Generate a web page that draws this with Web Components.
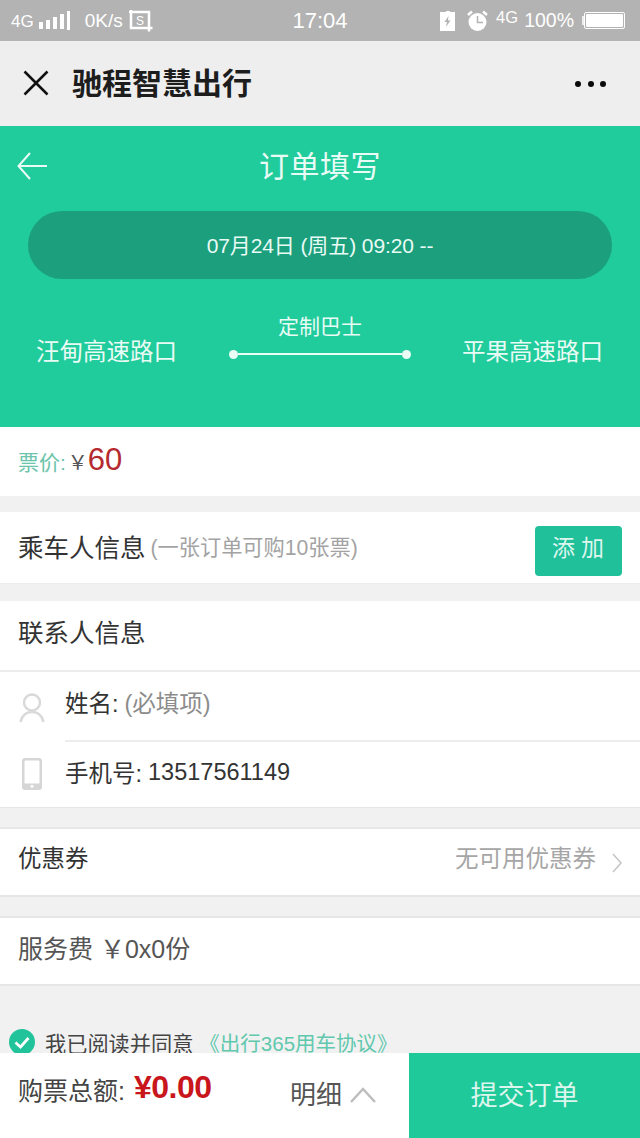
<!DOCTYPE html>
<html lang="zh">
<head>
<meta charset="utf-8">
<title>订单填写</title>
<style>
    html, body { margin: 0; padding: 0; }
    body {
        width: 640px;
        height: 1138px;
        overflow: hidden;
        position: relative;
        background: #f1f1f1;
        font-family: "Liberation Sans", "Noto Sans CJK SC", sans-serif;
    }
    page-gap { height: 16px; }
</style>
</head>
<body>
<status-bar></status-bar>
<nav-bar>驰程智慧出行</nav-bar>
<order-hero></order-hero>
<price-row></price-row>
<page-gap></page-gap>
<passenger-row></passenger-row>
<page-gap style="height:17px"></page-gap>
<contact-card></contact-card>
<page-gap style="height:19px"></page-gap>
<plain-row>
    <span>优惠券</span>
    <span slot="right">无可用优惠券</span>
</plain-row>
<page-gap style="height:19px"></page-gap>
<plain-row style="color:#555;font-size:25px;padding-bottom:8px">
    <span>服务费 ￥0x0份</span>
</plain-row>
<agree-row></agree-row>
<bottom-bar></bottom-bar>

<script>
class PageGap extends HTMLElement {
    constructor() {
        super();
        this.attachShadow({ mode: 'open' });
        this.shadowRoot.innerHTML = '<style>:host { display: block; }</style>';
    }
}

class StatusBar extends HTMLElement {
    constructor() {
        super();
        this.attachShadow({ mode: 'open' });
        this.shadowRoot.innerHTML = `
        <style>
            :host {
                display: flex;
                align-items: center;
                height: 41px;
                padding: 0 15px 0 11px;
                box-sizing: border-box;
                background: #b3b3b3;
                color: #fff;
                font-size: 20px;
                position: relative;
            }
            svg { display: block; flex: none; }
            .left, .right { display: flex; align-items: center; }
            .right { margin-left: auto; }
            .g { font-size: 17px; }
            .time {
                position: absolute;
                left: 0;
                right: 0;
                text-align: center;
                font-size: 22px;
            }
        </style>
        <div class="left">
            <span class="g" style="margin-top:2px">4G</span>
            <svg width="33" height="20" style="margin-left:5px" fill="#fff">
                <rect x="0" y="11" width="4" height="7"/>
                <rect x="7" y="9" width="4" height="9"/>
                <rect x="14" y="6" width="4" height="12"/>
                <rect x="21" y="3" width="4" height="15"/>
                <rect x="28" y="0" width="3" height="19"/>
            </svg>
            <span style="margin-left:13px;font-size:19px">0K/s</span>
            <svg width="24" height="22" style="margin-left:6px" fill="none" stroke="#fff" stroke-width="2.500">
                <path d="M2 2H20V18H2Z"/>
                <path d="M20 18H23.500M20 18V21.500"/>
                <path d="M0 2H2M2 0V2"/>
                <text x="7" y="15" font-size="12" fill="#fff" stroke="none" font-family="Liberation Sans">S</text>
            </svg>
        </div>
        <span class="time">17:04</span>
        <div class="right">
            <svg width="15" height="20" fill="#fff">
                <path d="M3 1H6V0H10V1H15V20H0V1Z"/>
                <path d="M8.5 5L4.5 11H7L6 16L10.500 9.500H8Z" fill="#b3b3b3"/>
            </svg>
            <svg width="21" height="22" style="margin-left:12px">
                <circle cx="10.500" cy="12" r="9" fill="#fff"/>
                <path d="M10.500 6V12.500H16" fill="none" stroke="#b3b3b3" stroke-width="1.500"/>
                <path d="M1 5L5 1.500M20 5L16 1.500" stroke="#fff" stroke-width="2.500" fill="none"/>
            </svg>
            <span class="g" style="margin-left:8px;margin-top:-6px;font-size:16.500px">4G</span>
            <span style="margin-left:6px;font-size:19.500px">100%</span>
            <div style="margin-left:8px;display:flex;align-items:center">
                <div style="width:2px;height:9px;background:#eee"></div>
                <div style="border:1px solid #fff;border-radius:2px;padding:1px;box-sizing:content-box;width:37px;height:13px">
                    <div style="width:100%;height:100%;background:#fff;border-radius:1px"></div>
                </div>
            </div>
        </div>`;
    }
}

class NavBar extends HTMLElement {
    constructor() {
        super();
        this.attachShadow({ mode: 'open' });
        this.shadowRoot.innerHTML = `
        <style>
            :host {
                display: flex;
                align-items: center;
                height: 85px;
                padding: 0 34px 0 23px;
                box-sizing: border-box;
                background: #eeeeee;
                color: #1d1d1d;
            }
            .title {
                margin-left: 23px;
                margin-bottom: 6px;
                font-size: 30px;
                font-weight: 700;
            }
            .more { margin-left: auto; display: flex; gap: 6.500px; }
            .more i { width: 6px; height: 6px; border-radius: 50%; background: #0a0a0a; display: block; }
            svg { display: block; margin-bottom: 2px; }
        </style>
        <svg width="26" height="26" stroke="#111" stroke-width="2.500" fill="none">
            <path d="M1.500 1.500L24.500 24.500M24.500 1.500L1.500 24.500"/>
        </svg>
        <span class="title"><slot></slot></span>
        <div class="more"><i></i><i></i><i></i></div>`;
    }
}

class OrderHero extends HTMLElement {
    constructor() {
        super();
        this.attachShadow({ mode: 'open' });
        this.shadowRoot.innerHTML = `
        <style>
            :host {
                display: block;
                height: 301px;
                box-sizing: border-box;
                background: #20cb9c;
                color: #e9fbf5;
            }
            .head {
                display: flex;
                align-items: center;
                justify-content: center;
                height: 85px;
                padding-bottom: 10px;
                box-sizing: border-box;
                position: relative;
                font-size: 30px;
                letter-spacing: 0.500px;
            }
            .head svg { position: absolute; left: 16px; top: 25px; }
            .date {
                margin: 0 28px;
                height: 68px;
                padding-bottom: 2px;
                box-sizing: border-box;
                border-radius: 34px;
                background: #1b9f7d;
                display: flex;
                align-items: center;
                justify-content: center;
                font-size: 21px;
                letter-spacing: -0.100px;
            }
            .route {
                display: grid;
                grid-template-columns: 36px 142px 51px 182px 51px 142px;
                align-items: end;
                margin-top: 34px;
                height: 53px;
                font-size: 23.500px;
            }
            .city { grid-row: 1; white-space: nowrap; line-height: 28px; }
            .line-box { grid-column: 4; text-align: center; font-size: 21px; }
            .line-label { line-height: 26px; margin-bottom: 9px; }
            .line { display: flex; align-items: center; height: 10px; margin-bottom: 7px; }
            .line i { width: 9px; height: 9px; border-radius: 50%; background: #eafcf6; flex: none; }
            .line b { flex: 1; height: 1.500px; background: #eafcf6; }
        </style>
        <div class="head">
            <svg width="32" height="30" fill="none" stroke="#e9fbf5" stroke-width="2">
                <path d="M14 2L2.500 15L14 28M2.500 15H31"/>
            </svg>
            <span>订单填写</span>
        </div>
        <div class="date">07月24日 (周五) 09:20 --</div>
        <div class="route">
            <span class="city" style="grid-column:2">汪甸高速路口</span>
            <div class="line-box">
                <div class="line-label">定制巴士</div>
                <div class="line"><i></i><b></b><i></i></div>
            </div>
            <span class="city" style="grid-column:6">平果高速路口</span>
        </div>`;
    }
}

class PriceRow extends HTMLElement {
    constructor() {
        super();
        this.attachShadow({ mode: 'open' });
        this.shadowRoot.innerHTML = `
        <style>
            :host {
                display: flex;
                align-items: baseline;
                height: 69px;
                padding: 14px 0 0 18px;
                box-sizing: border-box;
                background: #fff;
                line-height: 38px;
            }
            .label { color: #6cc4ab; font-size: 21px; }
            .yen { color: #555; font-size: 20px; margin-left: 2px; }
            .num { color: #b52a2e; font-size: 31px; }
        </style>
        <span class="label">票价:</span><span class="yen">￥</span><span class="num">60</span>`;
    }
}

class PassengerRow extends HTMLElement {
    constructor() {
        super();
        this.attachShadow({ mode: 'open' });
        this.shadowRoot.innerHTML = `
        <style>
            :host {
                display: flex;
                align-items: center;
                height: 72px;
                padding: 0 18px 4px;
                box-sizing: border-box;
                background: #fff;
                border-bottom: 1px solid #ececec;
            }
            .t { font-size: 25.500px; color: #333; }
            .hint { font-size: 21.200px; color: #a3a3a3; margin-left: 5px; }
            .add {
                margin-left: auto;
                margin-top: 10px;
                width: 87px;
                height: 50px;
                border-radius: 4px;
                background: #20c09a;
                color: #dcf6ee;
                font-size: 23px;
                letter-spacing: 6px;
                display: flex;
                align-items: center;
                justify-content: center;
                padding: 0 0 9px 5px;
                box-sizing: border-box;
            }
        </style>
        <span class="t">乘车人信息</span><span class="hint">(一张订单可购10张票)</span>
        <div class="add">添加</div>`;
    }
}

class ContactCard extends HTMLElement {
    constructor() {
        super();
        this.attachShadow({ mode: 'open' });
        this.shadowRoot.innerHTML = `
        <style>
            :host {
                display: block;
                background: #fff;
                color: #333;
                font-size: 23.500px;
                border-bottom: 1px solid #e6e6e6;
                height: 207px;
                box-sizing: border-box;
            }
            .head {
                height: 71px;
                padding: 0 18px 10px;
                box-sizing: border-box;
                display: flex;
                align-items: center;
                border-bottom: 2px solid #ececec;
                font-size: 25.500px;
            }
            .row { display: flex; height: 68px; align-items: center; }
            .icon { width: 65px; flex: none; display: flex; justify-content: center; padding-right: 1px; box-sizing: border-box; }
            .body { flex: 1; height: 100%; display: flex; align-items: center; padding-bottom: 8px; box-sizing: border-box; }
            .line { border-bottom: 2px solid #ececec; height: 70px; }
            .muted { color: #8c8c8c; margin-left: 6px; }
            svg { display: block; }
        </style>
        <div class="head">联系人信息</div>
        <div class="row" style="height:70px">
            <div class="icon">
                <svg width="26" height="30" fill="none" stroke="#d9d9d9" stroke-width="2.500" style="margin-top:2px">
                    <circle cx="13" cy="9.500" r="8"/>
                    <path d="M1.500 29C3 22 7.500 19 13 19C18.500 19 23 22 24.500 29"/>
                </svg>
            </div>
            <div class="body line"><span>姓名:</span><span class="muted">(必填项)</span></div>
        </div>
        <div class="row">
            <div class="icon">
                <svg width="20" height="32" style="margin-top:-4px">
                    <rect x="1.250" y="1.250" width="17.500" height="29.500" rx="2" fill="none" stroke="#d6d6d6" stroke-width="2.500"/>
                    <rect x="1" y="25.500" width="18" height="6" fill="#d6d6d6"/>
                    <circle cx="10" cy="28.300" r="1.500" fill="#fff"/>
                </svg>
            </div>
            <div class="body"><span>手机号:</span><span style="margin-left:6px">13517561149</span></div>
        </div>`;
    }
}

class PlainRow extends HTMLElement {
    constructor() {
        super();
        this.attachShadow({ mode: 'open' });
        this.shadowRoot.innerHTML = `
        <style>
            :host {
                display: flex;
                align-items: center;
                height: 70px;
                padding: 0 18px 10px;
                box-sizing: border-box;
                background: #fff;
                border-top: 2px solid #e6e6e6;
                border-bottom: 2px solid #e6e6e6;
                font-size: 23.500px;
                color: #333;
            }
            .right {
                margin-left: auto;
                display: flex;
                align-items: center;
                color: #a6a6a6;
            }
            svg { display: block; margin-left: 16px; margin-top: 11px; }
        </style>
        <slot></slot>
        <div class="right" id="right"><slot name="right"></slot></div>`;
    }

    connectedCallback() {
        if (!this.querySelector('[slot=right]') || this.shadowRoot.querySelector('svg')) return;
        this.shadowRoot.getElementById('right').insertAdjacentHTML('beforeend',
            '<svg width="10" height="20" fill="none" stroke="#c4c4c4" stroke-width="1.500"><path d="M1 1L9 10L1 19"/></svg>');
    }
}

class AgreeRow extends HTMLElement {
    constructor() {
        super();
        this.attachShadow({ mode: 'open' });
        this.shadowRoot.innerHTML = `
        <style>
            :host {
                display: flex;
                align-items: center;
                margin-top: 41px;
                padding-left: 9px;
                font-size: 21.200px;
                color: #444;
                height: 30px;
            }
            svg { display: block; margin-right: 10px; flex: none; }
            .link { color: #5fc8ad; margin-left: 6px; font-size: 20.500px; }
        </style>
        <svg width="26" height="26">
            <circle cx="13" cy="13" r="13" fill="#20c39a"/>
            <path d="M6.500 13.500L11.500 18L19.500 9" fill="none" stroke="#fff" stroke-width="2.800"/>
        </svg>
        <span>我已阅读并同意</span><span class="link">《出行365用车协议》</span>`;
    }
}

class BottomBar extends HTMLElement {
    constructor() {
        super();
        this.attachShadow({ mode: 'open' });
        this.shadowRoot.innerHTML = `
        <style>
            :host {
                position: absolute;
                left: 0;
                right: 0;
                bottom: 0;
                height: 85px;
                display: flex;
                background: #fff;
            }
            .total {
                flex: 1;
                display: flex;
                align-items: center;
                padding: 0 0 0 18px;
                color: #444;
                font-size: 25px;
            }
            .amount { color: #c8161c; font-size: 32px; font-weight: 700; margin-left: 9px; margin-top: -16px; letter-spacing: -0.500px; }
            .label { margin-top: -14px; }
            .detail { margin-left: auto; margin-right: 33px; display: flex; align-items: center; font-size: 26px; color: #555; margin-top: -7px; }
            .detail svg { display: block; margin-left: 8px; margin-top: 6px; }
            .submit {
                width: 231px;
                background: #20c99a;
                color: #dcf6ee;
                font-size: 27px;
                display: flex;
                align-items: center;
                justify-content: center;
                padding-bottom: 4px;
                box-sizing: border-box;
            }
        </style>
        <div class="total">
            <span class="label">购票总额:</span><span class="amount">¥0.00</span>
            <div class="detail"><span>明细</span>
                <svg width="26" height="16" fill="none" stroke="#bdbdbd" stroke-width="2.500"><path d="M1 15L13 2L25 15"/></svg>
            </div>
        </div>
        <div class="submit">提交订单</div>`;
    }
}

customElements.define('page-gap', PageGap);
customElements.define('status-bar', StatusBar);
customElements.define('nav-bar', NavBar);
customElements.define('order-hero', OrderHero);
customElements.define('price-row', PriceRow);
customElements.define('passenger-row', PassengerRow);
customElements.define('contact-card', ContactCard);
customElements.define('plain-row', PlainRow);
customElements.define('agree-row', AgreeRow);
customElements.define('bottom-bar', BottomBar);
</script>
</body>
</html>
